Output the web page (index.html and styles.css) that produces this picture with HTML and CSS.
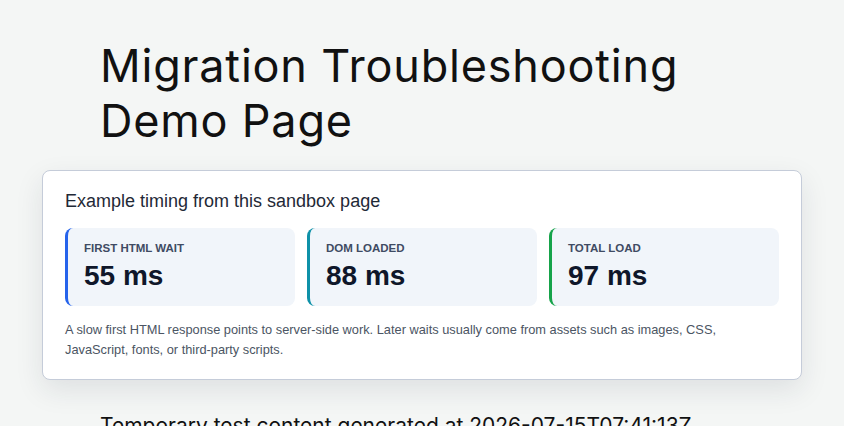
FILE: index.html
```html
<!DOCTYPE html>
<html lang="en">
<head>
<meta charset="utf-8">
<title>Migration Troubleshooting Demo Page</title>
<link rel="stylesheet" href="styles.css">
</head>
<body>
<main class="page">
  <h1 class="title">Migration Troubleshooting Demo Page</h1>
  <section class="card">
    <h2 class="card-title">Example timing from this sandbox page</h2>
    <div class="metrics">
      <div class="metric metric-blue">
        <div class="metric-label">FIRST HTML WAIT</div>
        <div class="metric-value">55 ms</div>
      </div>
      <div class="metric metric-teal">
        <div class="metric-label">DOM LOADED</div>
        <div class="metric-value">88 ms</div>
      </div>
      <div class="metric metric-green">
        <div class="metric-label">TOTAL LOAD</div>
        <div class="metric-value">97 ms</div>
      </div>
    </div>
    <p class="card-note">A slow first HTML response points to server-side work. Later waits usually come from assets such as images, CSS, JavaScript, fonts, or third-party scripts.</p>
  </section>
  <p class="body-text">Temporary test content generated at 2026-07-15T07:41:13Z.</p>
</main>
</body>
</html>
```

FILE: styles.css
```css
html, body {
  margin: 0;
  padding: 0;
}
body {
  background: #f4f6f5;
  color: #111;
  font-family: Inter, "Liberation Sans", sans-serif;
}
.page {
  width: 760px;
  margin: 0 auto;
  padding-top: 38px;
}
.title {
  margin: 0 58px;
  font-family: Inter, "Liberation Sans", sans-serif;
  font-weight: 400;
  font-size: 45px;
  line-height: 55px;
  letter-spacing: 0.8px;
  color: #111;
}
.card {
  margin-top: 22px;
  background: #fff;
  border: 1px solid #c5ccd9;
  border-radius: 8px;
  box-shadow: 0 10px 28px rgba(30, 40, 60, 0.10);
  padding: 19px 22px 19px;
  font-family: "Liberation Sans", Arial, sans-serif;
}
.card-title {
  margin: 0;
  font-size: 18px;
  font-weight: 400;
  line-height: 22px;
  color: #1f2937;
}
.metrics {
  display: grid;
  grid-template-columns: repeat(3, 1fr);
  gap: 12px;
  margin-top: 16px;
}
.metric {
  background: #f1f5fa;
  border-radius: 8px;
  border-left: 3px solid #2563eb;
  padding: 13px 16px 15px;
  height: 78px;
  box-sizing: border-box;
}
.metric-teal { border-left-color: #0e91a8; }
.metric-green { border-left-color: #16a34a; }
.metric-label {
  font-size: 11.5px;
  font-weight: 700;
  color: #3f4b63;
  line-height: 14px;
}
.metric-value {
  margin-top: 5px;
  font-size: 28px;
  font-weight: 700;
  line-height: 32px;
  color: #0f172a;
}
.card-note {
  margin: 14px 0 0;
  max-width: 700px;
  font-size: 12.8px;
  line-height: 20px;
  color: #4b5563;
}
.body-text {
  margin: 31px 58px 0;
  font-family: Inter, "Liberation Sans", sans-serif;
  font-size: 21px;
  line-height: 30px;
  color: #111;
}
```
